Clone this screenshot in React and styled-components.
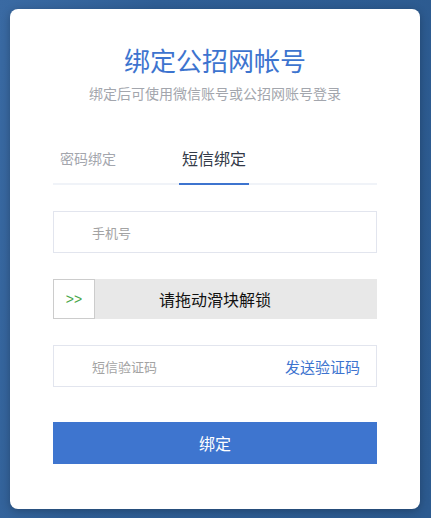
import React from 'react'
import styled, { createGlobalStyle } from 'styled-components'

const GlobalStyle = createGlobalStyle`
  html, body {
    margin: 0;
    padding: 0;
  }
  body {
    font-family: "Noto Sans CJK SC", "Noto Sans", sans-serif;
    background: linear-gradient(100deg, #3a6aa3 0%, #2f5e95 30%, #2c5a8f 100%);
    min-height: 518px;
  }
`

const Page = styled.div`
  padding: 9px 11px 9px 10px;
  box-sizing: border-box;
`

const Card = styled.div`
  background: #fff;
  border-radius: 8px;
  height: 500px;
  box-sizing: border-box;
  padding: 33px 43px 0 43px;
  box-shadow: 0 2px 8px rgba(0, 0, 0, 0.25);
`

const Title = styled.h1`
  margin: 0;
  text-align: center;
  font-size: 26px;
  font-weight: 400;
  line-height: 36px;
  color: #3d74cf;
`

const Subtitle = styled.p`
  margin: 6px 0 0;
  text-align: center;
  font-size: 14px;
  line-height: 18px;
  color: #a3a6ad;
`

const Tabs = styled.div`
  display: flex;
  align-items: flex-end;
  gap: 60px;
  margin-top: 45px;
  border-bottom: 2px solid #f0f3f8;
`

const Tab = styled.div`
  padding: 0 3px 14px;
  margin-left: ${p => (p.first ? '4px' : '0')};
  margin-bottom: -2px;
  font-size: ${p => (p.active ? '16px' : '14px')};
  line-height: 22px;
  color: ${p => (p.active ? '#333a48' : '#a3a6ad')};
  border-bottom: 2px solid ${p => (p.active ? '#3d74cf' : 'transparent')};
`

const Form = styled.div`
  display: flex;
  flex-direction: column;
  margin-top: 26px;
`

const Field = styled.div`
  display: flex;
  align-items: center;
  height: 42px;
  box-sizing: border-box;
  border: 1px solid #e2e5ee;
  padding: 0 16px 0 38px;
  margin-bottom: ${p => p.gap || 0}px;
`

const Placeholder = styled.span`
  flex: 1;
  font-size: 13px;
  color: #a3a3a3;
`

const SendCode = styled.span`
  font-size: 15px;
  color: #3d74cf;
`

const Slider = styled.div`
  position: relative;
  display: flex;
  align-items: center;
  justify-content: center;
  height: 40px;
  background: #e8e8e8;
  margin-bottom: 26px;
`

const Handle = styled.div`
  position: absolute;
  left: 0;
  top: 0;
  width: 42px;
  height: 40px;
  box-sizing: border-box;
  background: #fff;
  border: 1px solid #cccccc;
  display: flex;
  align-items: center;
  justify-content: center;
  color: #4aa84a;
  font-family: "Liberation Sans", sans-serif;
  font-size: 14px;
  font-weight: 300;
`

const SliderText = styled.span`
  font-size: 16px;
  color: #111;
`

const Button = styled.button`
  margin-top: 35px;
  height: 42px;
  border: none;
  background: #3e75cf;
  color: #fff;
  font-family: inherit;
  font-size: 16px;
`

export default function App() {
  return (
    <>
      <GlobalStyle />
      <Page>
        <Card>
          <Title>绑定公招网帐号</Title>
          <Subtitle>绑定后可使用微信账号或公招网账号登录</Subtitle>
          <Tabs>
            <Tab first>密码绑定</Tab>
            <Tab active>短信绑定</Tab>
          </Tabs>
          <Form>
            <Field gap={26}>
              <Placeholder>手机号</Placeholder>
            </Field>
            <Slider>
              <Handle>&gt;&gt;</Handle>
              <SliderText>请拖动滑块解锁</SliderText>
            </Slider>
            <Field>
              <Placeholder>短信验证码</Placeholder>
              <SendCode>发送验证码</SendCode>
            </Field>
            <Button>绑定</Button>
          </Form>
        </Card>
      </Page>
    </>
  )
}
